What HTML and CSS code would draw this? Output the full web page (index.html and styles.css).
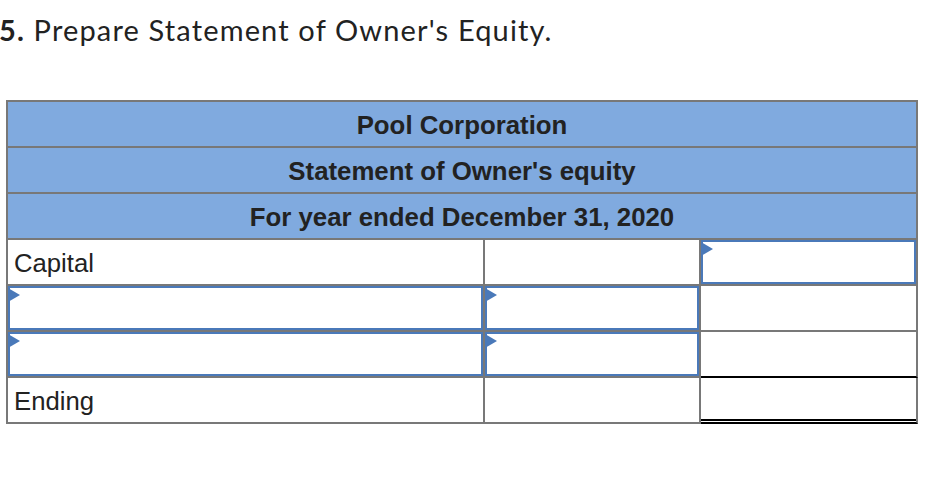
FILE: index.html
```html
<!DOCTYPE html>
<html>
<head>
<meta charset="utf-8">
<link rel="stylesheet" href="styles.css">
</head>
<body>
<h1 class="title"><b>5.</b> Prepare Statement of Owner's Equity.</h1>
<table class="stmt">
  <colgroup>
    <col class="c1">
    <col class="c2">
    <col class="c3">
  </colgroup>
  <tr class="hdr"><td colspan="3">Pool Corporation</td></tr>
  <tr class="hdr"><td colspan="3">Statement of Owner's equity</td></tr>
  <tr class="hdr"><td colspan="3">For year ended December 31, 2020</td></tr>
  <tr>
    <td class="label">Capital</td>
    <td></td>
    <td class="cell-in"><div class="inp"><span class="flag"></span></div></td>
  </tr>
  <tr>
    <td class="cell-in"><div class="inp"><span class="flag"></span></div></td>
    <td class="cell-in"><div class="inp"><span class="flag"></span></div></td>
    <td></td>
  </tr>
  <tr>
    <td class="cell-in"><div class="inp"><span class="flag"></span></div></td>
    <td class="cell-in"><div class="inp"><span class="flag"></span></div></td>
    <td class="total-top"></td>
  </tr>
  <tr>
    <td class="label">Ending</td>
    <td></td>
    <td class="total-double"></td>
  </tr>
</table>
</body>
</html>
```

FILE: styles.css
```css
html, body {
  margin: 0;
  padding: 0;
  background: #fff;
}

.title {
  margin: 0 0 0 -1px;
  padding: 13px 0 0 0;
  font-family: "Lato", "Open Sans", sans-serif;
  font-size: 29px;
  line-height: 34px;
  font-weight: 400;
  letter-spacing: 1.15px;
  color: #222;
}

.title b {
  font-weight: 700;
}

.stmt {
  margin: 53px 0 0 6px;
  width: 912px;
  table-layout: fixed;
  border-collapse: separate;
  border-spacing: 0;
  border-left: 2px solid #787878;
  border-top: 2px solid #787878;
  font-family: "Liberation Sans", Arial, sans-serif;
  color: #222;
}

.c1 { width: 477px; }
.c2 { width: 216px; }
.c3 { width: 217px; }

.stmt td {
  height: 44px;
  padding: 0;
  border-right: 2px solid #787878;
  border-bottom: 2px solid #787878;
  vertical-align: middle;
}

.stmt .hdr td {
  height: 42px;
  padding-top: 2px;
  background: #80aadf;
  text-align: center;
  font-weight: 700;
  font-size: 25.8px;
}

.stmt td.label {
  height: 42px;
  padding: 2px 0 0 6px;
  font-size: 25.7px;
}

.inp {
  position: relative;
  box-sizing: border-box;
  height: 44px;
  border: 2px solid #4a79b9;
  background: #fff;
}

.flag {
  position: absolute;
  left: -2px;
  top: 0;
  width: 0;
  height: 0;
  border-left: 12px solid #4a79b9;
  border-top: 7px solid transparent;
  border-bottom: 7px solid transparent;
}

.stmt td.total-top {
  border-bottom-color: #000;
}

.stmt td.total-double {
  border-bottom-color: #000;
  box-shadow: inset 0 -1px 0 #fff, inset 0 -3px 0 #000;
}
```
